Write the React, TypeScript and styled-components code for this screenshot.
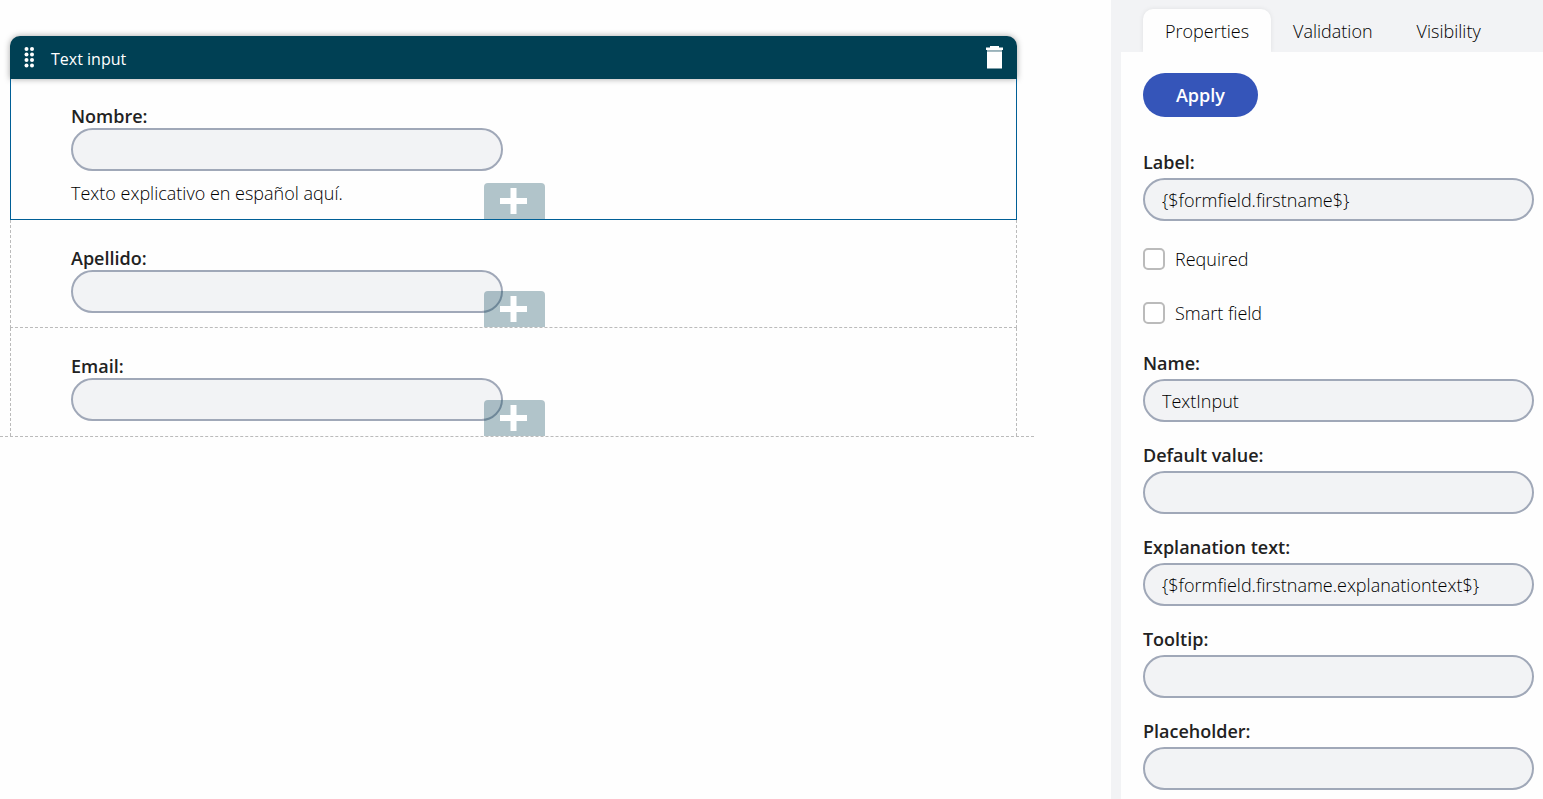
import React, { useId, useState } from "react";
import styled, { createGlobalStyle } from "styled-components";

const GlobalStyle = createGlobalStyle`
  *, *::before, *::after { box-sizing: border-box; }
  body {
    margin: 0;
    background: #fefefe;
    color: #000;
    font-family: "Open Sans", "Noto Sans", sans-serif;
    font-size: 18px;
    font-weight: 300;
    line-height: 24px;
  }
  button, input { font: inherit; color: inherit; }
`;

const Page = styled.div`
  display: grid;
  grid-template-columns: 72fr 28fr;
  min-height: 100vh;
`;

const Canvas = styled.main`
  padding: 36px 77px 0 0;
`;

const Form = styled.form`
  padding: 0 17px 0 10px;
  border-bottom: 1px dashed #bbb;
`;

const BlockHeader = styled.header`
  position: relative;
  display: flex;
  align-items: center;
  height: 43px;
  padding: 0 13px;
  border-radius: 10px 10px 0 0;
  background: #004054;
  color: #fff;
  box-shadow: 0 0 6px rgba(0, 0, 0, 0.35);
`;

const BlockTitle = styled.span`
  flex: 1;
  padding: 2px 0 0 16px;
  font-size: 16px;
  font-weight: 400;
`;

const IconButton = styled.button`
  display: flex;
  padding: 0;
  border: 0;
  background: none;
  color: #fff;
  cursor: pointer;
`;

const Block = styled.section<{ $selected?: boolean; $last?: boolean }>`
  position: relative;
  padding: ${(p) => (p.$selected ? 25 : 26)}px 60px ${(p) => (p.$last ? 15 : 14)}px;
  border: 1px ${(p) => (p.$selected ? "solid #005f96" : "dashed #bbb")};
  border-top: 0;
  ${(p) => p.$last && "border-bottom: 0;"}
`;

const AddButton = styled.button`
  position: absolute;
  bottom: 0;
  left: 50%;
  display: flex;
  justify-content: center;
  width: 61px;
  height: 36px;
  margin-left: -29px;
  padding: 5px 2px 0 0;
  border: 0;
  border-radius: 4px 4px 0 0;
  background: rgba(0, 64, 84, 0.3);
  color: #fff;
  cursor: pointer;
`;

const Field = styled.div<{ $narrow?: boolean }>`
  display: flex;
  flex-direction: column;
  gap: ${(p) => (p.$narrow ? 0 : 4)}px;
  max-width: ${(p) => (p.$narrow ? "432px" : "none")};
`;

const Label = styled.label`
  color: #222;
  font-weight: 600;
`;

const TextBox = styled.input`
  width: 100%;
  height: 43px;
  padding: 0 17px;
  border: 2px solid #a0a8b8;
  border-radius: 22px;
  background: #f2f3f5;
  outline: 0;
`;

const Explanation = styled.p`
  margin: 10px 0 0;
`;

const Panel = styled.aside`
  border-left: 10px solid #f2f3f5;
`;

const TabList = styled.div`
  display: flex;
  align-items: flex-end;
  height: 52px;
  padding-left: 22px;
  background: #f2f3f5;
  overflow: hidden;
`;

const Tab = styled.button<{ $active: boolean }>`
  height: 43px;
  padding: 0 22px;
  border: 0;
  border-radius: 10px 10px 0 0;
  background: ${(p) => (p.$active ? "#fefefe" : "transparent")};
  box-shadow: ${(p) => (p.$active ? "0 0 5px rgba(0, 0, 0, 0.08)" : "none")};
  color: #000;
  cursor: pointer;
`;

const PanelBody = styled.form`
  display: flex;
  flex-direction: column;
  align-items: stretch;
  gap: 21px;
  padding: 21px 9px 7px 22px;
`;

const ApplyButton = styled.button`
  align-self: flex-start;
  height: 44px;
  margin-bottom: 12px;
  padding: 0 33px;
  border: 0;
  border-radius: 22px;
  background: #3555b9;
  color: #fff;
  font-weight: 600;
  cursor: pointer;
`;

const CheckGroup = styled.div`
  display: flex;
  flex-direction: column;
  gap: 30px;
  padding: 5px 0;
`;

const CheckLabel = styled.label`
  display: flex;
  align-items: center;
  gap: 10px;
`;

const CheckBox = styled.input`
  appearance: none;
  width: 22px;
  height: 22px;
  margin: 0;
  border: 2px solid #bbb;
  border-radius: 5px;
  background: #fff;
  &:checked { background: #3555b9; }
`;

function DragIcon() {
  return (
    <svg width="12" height="22" viewBox="0 0 12 22" fill="currentColor" aria-hidden="true">
      {[2, 7.5, 13, 18.5].map((y) => (
        <g key={y}>
          <circle cx="3.5" cy={y} r="2" />
          <circle cx="9" cy={y} r="2" />
        </g>
      ))}
    </svg>
  );
}

function TrashIcon() {
  return (
    <svg width="19" height="24" viewBox="0 0 19 24" fill="currentColor" aria-hidden="true">
      <path d="M1 1.500h4V0h9v1.500h4V4H1z" />
      <path d="M2 5.500h15V22.500H2z" />
      <path d="M2 4h15v1.500H2z" opacity="0.6" />
    </svg>
  );
}

function PlusIcon() {
  return (
    <svg width="27" height="26" viewBox="0 0 27 26" fill="currentColor" aria-hidden="true">
      <path d="M10.5 0h6v10H27v6H16.500v10h-6V16H0v-6h10.500z" />
    </svg>
  );
}

type TextFieldProps = { label: string; value?: string; narrow?: boolean };

function TextField({ label, value = "", narrow }: TextFieldProps) {
  const id = useId();
  return (
    <Field $narrow={narrow}>
      <Label htmlFor={id}>{label}</Label>
      <TextBox id={id} type="text" defaultValue={value} />
    </Field>
  );
}

const tabs = ["Properties", "Validation", "Visibility"];

export default function App() {
  const [tab, setTab] = useState(tabs[0]);
  return (
    <>
      <GlobalStyle />
      <Page>
        <Canvas>
          <Form>
            <BlockHeader>
              <DragIcon />
              <BlockTitle>Text input</BlockTitle>
              <IconButton type="button" aria-label="Delete">
                <TrashIcon />
              </IconButton>
            </BlockHeader>
            <Block $selected>
              <TextField narrow label="Nombre:" />
              <Explanation>Texto explicativo en español aquí.</Explanation>
              <AddButton type="button" aria-label="Add field"><PlusIcon /></AddButton>
            </Block>
            <Block>
              <TextField narrow label="Apellido:" />
              <AddButton type="button" aria-label="Add field"><PlusIcon /></AddButton>
            </Block>
            <Block $last>
              <TextField narrow label="Email:" />
              <AddButton type="button" aria-label="Add field"><PlusIcon /></AddButton>
            </Block>
          </Form>
        </Canvas>
        <Panel>
          <TabList role="tablist">
            {tabs.map((name) => (
              <Tab
                key={name}
                type="button"
                role="tab"
                aria-selected={tab === name}
                $active={tab === name}
                onClick={() => setTab(name)}
              >
                {name}
              </Tab>
            ))}
          </TabList>
          <PanelBody onSubmit={(e) => e.preventDefault()}>
            <ApplyButton type="submit">Apply</ApplyButton>
            <TextField label="Label:" value="{$formfield.firstname$}" />
            <CheckGroup>
              <CheckLabel><CheckBox type="checkbox" />Required</CheckLabel>
              <CheckLabel><CheckBox type="checkbox" />Smart field</CheckLabel>
            </CheckGroup>
            <TextField label="Name:" value="TextInput" />
            <TextField label="Default value:" />
            <TextField label="Explanation text:" value="{$formfield.firstname.explanationtext$}" />
            <TextField label="Tooltip:" />
            <TextField label="Placeholder:" />
          </PanelBody>
        </Panel>
      </Page>
    </>
  );
}
